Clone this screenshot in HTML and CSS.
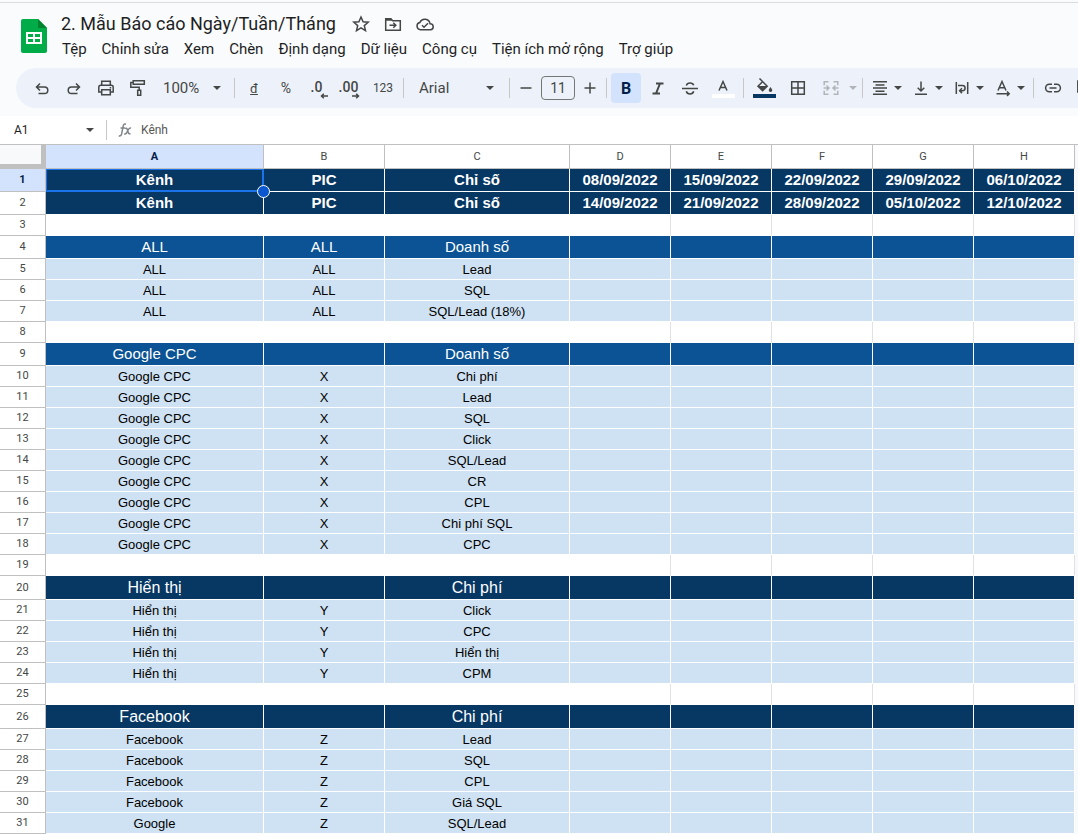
FILE: index.html
```html
<!DOCTYPE html>
<html lang="vi">
<head>
<meta charset="utf-8">
<title>2. Mẫu Báo cáo Ngày/Tuần/Tháng</title>
<link rel="stylesheet" href="styles.css">
</head>
<body>
<header class="topbar">
  <svg class="logo" viewBox="0 0 26 34" aria-hidden="true">
    <path fill="#00ac47" d="M2 0h15l9 9v23a2 2 0 0 1-2 2H2a2 2 0 0 1-2-2V2a2 2 0 0 1 2-2z"/>
    <path fill="#00832d" d="M17 0l9 9h-9z"/>
    <path fill="#fff" fill-rule="evenodd" d="M5 13h16v12H5zM7 15v3h5v-3zM14 15v3h5v-3zM7 20v3h5v-3zM14 20v3h5v-3z"/>
  </svg>
  <div class="heading">
    <div class="title-row">
      <h1 class="title">2. Mẫu Báo cáo Ngày/Tuần/Tháng</h1>
      <button class="mini" aria-label="Gắn dấu sao"><svg viewBox="0 0 20 20"><path d="M10 3l2.1 4.7 5.1.5-3.9 3.4 1.2 5-4.5-2.7-4.5 2.7 1.2-5-3.9-3.4 5.1-.5z"/></svg></button>
      <button class="mini" aria-label="Di chuyển"><svg viewBox="0 0 20 20"><path d="M2.7 4.7h5l2 2h7.6v9.600H2.700z"/><path class="solid" d="M2 4h6l2 2.800H2z"/><path d="M6.500 11.300h6M10.300 8.800l2.500 2.500-2.500 2.500"/></svg></button>
      <button class="mini" aria-label="Trạng thái tài liệu"><svg viewBox="0 0 20 20"><path d="M5.500 15.700a3.700 3.700 0 0 1-.6-7.300 5.300 5.300 0 0 1 10.100 1.300 3 3 0 0 1 .4 6zM7 11.200l2 2 4-4"/></svg></button>
    </div>
    <nav class="menu">
      <button>Tệp</button><button>Chỉnh sửa</button><button>Xem</button><button>Chèn</button><button>Định dạng</button><button>Dữ liệu</button><button>Công cụ</button><button>Tiện ích mở rộng</button><button>Trợ giúp</button>
    </nav>
  </div>
</header>

<div class="toolbar-wrap">
<div class="toolbar" role="toolbar">
  <button class="tool" aria-label="Hoàn tác"><svg viewBox="0 0 20 20"><path d="M8 5.500L4.500 9 8 12.500M5 9h7.500a3.300 3.300 0 0 1 0 6.600H6.500"/></svg></button>
  <button class="tool" aria-label="Làm lại"><svg viewBox="0 0 20 20"><path d="M12 5.500L15.500 9 12 12.500M15 9H7.500a3.300 3.300 0 0 0 0 6.600h6"/></svg></button>
  <button class="tool" aria-label="In"><svg viewBox="0 0 20 20"><path d="M5.700 7V3.300h8.600V7M5.700 14H2.800V9.300q0-2 2-2h10.400q2 0 2 2V14h-2.900M5.700 11.700h8.600v5H5.700zM13.700 9.700h1.500"/></svg></button>
  <button class="tool" aria-label="Sao chép định dạng"><svg viewBox="0 0 20 20"><path d="M5.200 2.800h11.100v3.400H5.200zM5.200 4.500H2.800v4.800h8.400v3M9.700 12.300h3v5h-3z"/></svg></button>
  <label class="pick zoom"><select aria-label="Thu phóng"><option>100%</option></select><svg class="caret" viewBox="0 0 10 10"><path d="M1 3h8L5 7z"/></svg></label>
  <span class="sep"></span>
  <button class="tool text under">đ</button>
  <button class="tool text percent">%</button>
  <button class="tool decimals" aria-label="Giảm số chữ số thập phân"><span>.0</span><svg viewBox="0 0 8 6"><path d="M8 3H1.500M3.800 .8L1.500 3l2.300 2.200"/></svg></button>
  <button class="tool decimals" aria-label="Tăng số chữ số thập phân"><span>.00</span><svg viewBox="0 0 8 6"><path d="M0 3h6.500M4.200 .8L6.500 3 4.200 5.200"/></svg></button>
  <button class="tool wide text">123</button>
  <span class="sep"></span>
  <label class="pick font"><select aria-label="Phông chữ"><option>Arial</option></select><svg class="caret" viewBox="0 0 10 10"><path d="M1 3h8L5 7z"/></svg></label>
  <span class="sep"></span>
  <button class="tool step" aria-label="Giảm cỡ chữ"><svg viewBox="0 0 20 20"><path d="M4.500 10h11"/></svg></button>
  <input class="size" aria-label="Cỡ chữ" value="11">
  <button class="tool step" aria-label="Tăng cỡ chữ"><svg viewBox="0 0 20 20"><path d="M4.500 10h11M10 4.500v11"/></svg></button>
  <span class="sep"></span>
  <button class="tool bold active" aria-pressed="true">B</button>
  <button class="tool" aria-label="In nghiêng"><svg viewBox="0 0 20 20"><path class="heavy" d="M8 5.500h7.500M4.500 15.500H12M12 5.500L8 15.500"/></svg></button>
  <button class="tool" aria-label="Gạch ngang"><svg viewBox="0 0 20 20"><path d="M2 10.500h16M13.700 7.300Q13 5 10 5T6.300 7.500M6.300 13.300Q7 16 10 16t3.700-2.700"/></svg></button>
  <button class="tool wide color white" aria-label="Màu văn bản"><svg viewBox="0 0 20 16"><path d="M6 12.500l4-9 4 9M7.300 9.500h5.400"/></svg></button>
  <span class="sep"></span>
  <button class="tool wide color navy" aria-label="Màu nền"><svg viewBox="0 0 20 16"><path d="M5.500 .5l7.700 7.700-4.600 4.500L4 8.200l5-5"/><path class="solid" d="M4 8h9l-4.400 4.700zM16.500 9q1.800 2.200 1.800 3.200a1.800 1.800 0 0 1-3.600 0q0-1 1.800-3.200z"/></svg></button>
  <button class="tool wide" aria-label="Đường viền"><svg viewBox="0 0 20 20"><path d="M3.700 3.700h12.600v12.600H3.700zM10 3.700v12.600M3.700 10h12.600"/></svg></button>
  <button class="tool faded" aria-label="Hợp nhất ô"><svg viewBox="0 0 20 20"><path d="M7.500 3.700H3.200v3.600M12.500 3.700h4.300v3.600M7.500 16.300H3.200v-3.600M12.500 16.300h4.300v-3.600M2.500 10h5M5.500 7.500L8 10l-2.500 2.500M17.500 10h-5M14.500 7.500L12 10l2.500 2.500"/></svg></button>
  <button class="narrow faded" aria-label="Kiểu hợp nhất"><svg class="caret" viewBox="0 0 10 10"><path d="M1 3h8L5 7z"/></svg></button>
  <span class="sep"></span>
  <button class="combo" aria-label="Căn ngang"><svg viewBox="0 0 20 20"><path d="M3 3.700h14M5.500 6.900h9M3 10h14M5.500 13.200h9M3 16.300h14"/></svg><svg class="caret" viewBox="0 0 10 10"><path d="M1 3h8L5 7z"/></svg></button>
  <button class="combo" aria-label="Căn dọc"><svg viewBox="0 0 20 20"><path d="M4 16.300h12M10 3.500v9.300M6.700 9.700L10 13l3.300-3.300"/></svg><svg class="caret" viewBox="0 0 10 10"><path d="M1 3h8L5 7z"/></svg></button>
  <button class="combo" aria-label="Xuống dòng"><svg viewBox="0 0 20 20"><path d="M4.300 4v12M15.700 4v12M6 7.500h4.500a2.600 2.600 0 0 1 0 5.200H8M10 10.300l-2.400 2.400 2.400 2.400"/></svg><svg class="caret" viewBox="0 0 10 10"><path d="M1 3h8L5 7z"/></svg></button>
  <button class="combo" aria-label="Xoay văn bản"><svg viewBox="0 0 20 20"><path d="M5 12.500L9 3.500l4 9M6.300 9.700h5.400M3.500 15.700h12.500M14 13.500l2.200 2.200-2.200 2.200"/></svg><svg class="caret" viewBox="0 0 10 10"><path d="M1 3h8L5 7z"/></svg></button>
  <span class="sep"></span>
  <button class="tool" aria-label="Chèn đường liên kết"><svg viewBox="0 0 20 20"><path d="M9 6.300H6.300a3.700 3.700 0 0 0 0 7.400H9M11 6.300h2.700a3.700 3.700 0 0 1 0 7.400H11M6.500 10h7"/></svg></button>
  <button class="tool" aria-label="Chèn nhận xét"><svg viewBox="0 0 20 20"><path d="M2.800 3h14.500v14l-3-3H2.800z"/></svg></button>
</div>
</div>

<div class="formula-bar">
  <label class="pick name"><input aria-label="Hộp tên" value="A1"><svg class="caret" viewBox="0 0 10 10"><path d="M1 3h8L5 7z"/></svg></label>
  <span class="sep"></span>
  <svg class="fx" viewBox="0 0 14 14" aria-hidden="true"><path d="M8 1.200Q5.800.2 5.200 3L3.600 11Q3 13.500.8 12.700M2.500 5h4.500M7 5.500q1.500-1 2.300 1l1 3q.6 2 2.200 1M13 5.200q-1.300-.5-2.600 1.300L8.500 10q-1 1.400-2.300.8"/></svg>
  <input class="formula" aria-label="Thanh công thức" value="Kênh">
</div>

<main class="sheet">
<table class="grid">
<colgroup><col class="c-num"><col class="c-a"><col class="c-b"><col class="c-c"><col class="c-d"><col class="c-d"><col class="c-d"><col class="c-d"><col class="c-d"></colgroup>
<thead>
<tr><th class="corner"></th><th class="on">A</th><th>B</th><th>C</th><th>D</th><th>E</th><th>F</th><th>G</th><th>H</th></tr>
</thead>
<tbody>
<tr class="head"><th class="on">1</th><td class="selected">Kênh</td><td>PIC</td><td>Chỉ số</td><td>08/09/2022</td><td>15/09/2022</td><td>22/09/2022</td><td>29/09/2022</td><td>06/10/2022</td></tr>
<tr class="head"><th>2</th><td>Kênh</td><td>PIC</td><td>Chỉ số</td><td>14/09/2022</td><td>21/09/2022</td><td>28/09/2022</td><td>05/10/2022</td><td>12/10/2022</td></tr>
<tr class="blank"><th>3</th><td></td><td></td><td></td><td></td><td></td><td></td><td></td><td></td></tr>
<tr class="blue"><th>4</th><td>ALL</td><td>ALL</td><td>Doanh số</td><td></td><td></td><td></td><td></td><td></td></tr>
<tr><th>5</th><td>ALL</td><td>ALL</td><td>Lead</td><td></td><td></td><td></td><td></td><td></td></tr>
<tr><th>6</th><td>ALL</td><td>ALL</td><td>SQL</td><td></td><td></td><td></td><td></td><td></td></tr>
<tr><th>7</th><td>ALL</td><td>ALL</td><td>SQL/Lead (18%)</td><td></td><td></td><td></td><td></td><td></td></tr>
<tr class="blank"><th>8</th><td></td><td></td><td></td><td></td><td></td><td></td><td></td><td></td></tr>
<tr class="blue"><th>9</th><td>Google CPC</td><td></td><td>Doanh số</td><td></td><td></td><td></td><td></td><td></td></tr>
<tr><th>10</th><td>Google CPC</td><td>X</td><td>Chi phí</td><td></td><td></td><td></td><td></td><td></td></tr>
<tr><th>11</th><td>Google CPC</td><td>X</td><td>Lead</td><td></td><td></td><td></td><td></td><td></td></tr>
<tr><th>12</th><td>Google CPC</td><td>X</td><td>SQL</td><td></td><td></td><td></td><td></td><td></td></tr>
<tr><th>13</th><td>Google CPC</td><td>X</td><td>Click</td><td></td><td></td><td></td><td></td><td></td></tr>
<tr><th>14</th><td>Google CPC</td><td>X</td><td>SQL/Lead</td><td></td><td></td><td></td><td></td><td></td></tr>
<tr><th>15</th><td>Google CPC</td><td>X</td><td>CR</td><td></td><td></td><td></td><td></td><td></td></tr>
<tr><th>16</th><td>Google CPC</td><td>X</td><td>CPL</td><td></td><td></td><td></td><td></td><td></td></tr>
<tr><th>17</th><td>Google CPC</td><td>X</td><td>Chi phí SQL</td><td></td><td></td><td></td><td></td><td></td></tr>
<tr><th>18</th><td>Google CPC</td><td>X</td><td>CPC</td><td></td><td></td><td></td><td></td><td></td></tr>
<tr class="blank"><th>19</th><td></td><td></td><td></td><td></td><td></td><td></td><td></td><td></td></tr>
<tr class="navy-row"><th>20</th><td>Hiển thị</td><td></td><td>Chi phí</td><td></td><td></td><td></td><td></td><td></td></tr>
<tr><th>21</th><td>Hiển thị</td><td>Y</td><td>Click</td><td></td><td></td><td></td><td></td><td></td></tr>
<tr><th>22</th><td>Hiển thị</td><td>Y</td><td>CPC</td><td></td><td></td><td></td><td></td><td></td></tr>
<tr><th>23</th><td>Hiển thị</td><td>Y</td><td>Hiển thị</td><td></td><td></td><td></td><td></td><td></td></tr>
<tr><th>24</th><td>Hiển thị</td><td>Y</td><td>CPM</td><td></td><td></td><td></td><td></td><td></td></tr>
<tr class="blank"><th>25</th><td></td><td></td><td></td><td></td><td></td><td></td><td></td><td></td></tr>
<tr class="navy-row"><th>26</th><td>Facebook</td><td></td><td>Chi phí</td><td></td><td></td><td></td><td></td><td></td></tr>
<tr><th>27</th><td>Facebook</td><td>Z</td><td>Lead</td><td></td><td></td><td></td><td></td><td></td></tr>
<tr><th>28</th><td>Facebook</td><td>Z</td><td>SQL</td><td></td><td></td><td></td><td></td><td></td></tr>
<tr><th>29</th><td>Facebook</td><td>Z</td><td>CPL</td><td></td><td></td><td></td><td></td><td></td></tr>
<tr><th>30</th><td>Facebook</td><td>Z</td><td>Giá SQL</td><td></td><td></td><td></td><td></td><td></td></tr>
<tr><th>31</th><td>Google</td><td>Z</td><td>SQL/Lead</td><td></td><td></td><td></td><td></td><td></td></tr>
</tbody>
</table>
</main>
</body>
</html>
```

FILE: styles.css
```css
* { box-sizing: border-box; }

body {
  margin: 0;
  padding-top: 2px;
  background: #f9fbfd;
  color: #1f1f1f;
  font-family: Roboto, "Liberation Sans", sans-serif;
  font-size: 14px;
}

button, input, select {
  margin: 0;
  padding: 0;
  border: 0;
  background: none;
  color: inherit;
  font: inherit;
  appearance: none;
  outline: 0;
}

svg {
  display: block;
  flex: none;
  fill: none;
  stroke: #444746;
  stroke-width: 1.5;
}

.solid, .caret path { fill: #444746; stroke: none; }
.heavy { stroke-width: 2; }
.caret { width: 10px; height: 10px; }

/* Title and menus */
.topbar {
  display: flex;
  gap: 14px;
  padding: 9px 21px;
  border-top: 1px solid #dadce0;
}

.logo { width: 26px; height: 34px; margin-top: 7px; stroke: none; }

.heading { display: flex; flex-direction: column; gap: 3px; }

.title-row { display: flex; align-items: center; height: 24px; }

.title {
  margin: 0 15px 0 0;
  font-size: 18px;
  font-weight: 400;
  line-height: 24px;
  white-space: nowrap;
}

.mini { width: 20px; height: 20px; margin-right: 12px; }
.mini svg { width: 20px; height: 20px; }

.menu { display: flex; gap: 15px; padding-left: 1px; font-size: 15px; white-space: nowrap; }
.menu button { height: 20px; line-height: 20px; }

/* Toolbar */
.toolbar-wrap { overflow: hidden; padding: 0 0 8px 16px; }

.toolbar {
  display: flex;
  align-items: center;
  width: max-content;
  height: 40px;
  padding: 0 10px;
  border-radius: 20px 0 0 20px;
  background: #edf2fa;
  color: #444746;
}

.tool, .combo, .narrow {
  display: flex;
  align-items: center;
  justify-content: center;
  flex: none;
  width: 32px;
  height: 30px;
}
.tool svg, .combo svg { width: 20px; height: 20px; }
.tool.wide { width: 34px; }
.tool.step { width: 26px; }
.tool.text { font-size: 12px; }
.tool.percent { font-size: 14px; }
.tool.under { font-size: 13px; text-decoration: underline; }
.narrow { width: 12px; }
.faded { opacity: 0.35; }

.combo { gap: 3px; width: 41px; }
.combo .caret, .narrow .caret { width: 10px; height: 10px; }

.sep { flex: none; width: 1px; height: 20px; margin: 0 3px; background: #c7c7c7; }

.tool.decimals {
  flex-direction: column;
  padding-top: 3px;
  font-size: 14px;
  font-weight: 500;
  line-height: 12px;
}
.tool.decimals svg { width: 8px; height: 6px; margin-left: 12px; }
.tool.decimals span { margin-right: 3px; }

.pick { display: flex; align-items: center; flex: none; }
.pick select, .pick input { flex: 1; min-width: 0; }
.zoom { width: 77px; padding: 0 9px; font-size: 15px; }
.font { width: 99px; padding: 0 11px 0 12px; font-size: 15px; }

.size {
  width: 34px;
  height: 24px;
  margin: 0 2px;
  border: 1px solid #747775;
  border-radius: 4px;
  text-align: center;
}

.bold { width: 30px; margin: 0 1px; font-size: 16px; font-weight: 700; }
.active { border-radius: 4px; background: #d3e3fd; color: #041e49; }

.color { flex-direction: column; }
.tool.color svg { width: 20px; height: 16px; }
.color::after { content: ""; width: 23px; height: 4px; }
.white::after { background: #fff; }
.navy::after { background: #073763; }

/* Formula bar */
.formula-bar {
  display: flex;
  align-items: center;
  height: 29px;
  border-bottom: 1px solid #c0c0c0;
  background: #fff;
  font-size: 12px;
}
.name { width: 103px; padding: 0 8px 0 14px; }
.fx { width: 14px; height: 14px; margin: 0 9px 0 8px; stroke: #80868b; }
.formula { flex: 1; min-width: 0; color: #575757; }

/* Grid */
.sheet { overflow: hidden; background: #f8f9fa; }

.grid {
  width: 1075px;
  table-layout: fixed;
  border-spacing: 0;
  font-family: "Liberation Sans", Arial, sans-serif;
  font-size: 13px;
  line-height: 18px;
}
.c-num { width: 46px; }
.c-a { width: 218px; }
.c-b { width: 121px; }
.c-c { width: 185px; }
.c-d { width: 101px; }

.grid th {
  padding: 0;
  border: solid #c0c0c0;
  border-width: 0 1px 1px 0;
  background: #fff;
  color: #444746;
  font-family: Roboto, "Liberation Sans", sans-serif;
  font-size: 11px;
  font-weight: 400;
}
.grid thead th { height: 24px; }
.grid .corner { border-width: 0 5px 5px 0; background: #f8f9fa; }
.grid .on { background: #d3e3fd; color: #041e49; font-weight: 700; }

.grid td {
  height: 21px;
  padding: 2px 0 0;
  border: solid #fff;
  border-width: 0 1px 1px 0;
  background: #cfe2f3;
  color: #000;
  text-align: center;
  white-space: nowrap;
}
.grid .blank td { background: #fff; }
.grid .blank td:nth-child(n + 5) { border-right-color: #e1e1e1; }

.grid .head td {
  height: 23px;
  padding: 0;
  background: #073763;
  color: #fff;
  font-size: 15px;
  font-weight: 700;
}
.grid .blue td { height: 23px; padding: 0; background: #0b5394; color: #fff; font-size: 15px; }
.grid .navy-row td { height: 24px; padding: 0; background: #073763; color: #fff; font-size: 16px; }

.selected { position: relative; }
.selected::before {
  content: "";
  position: absolute;
  inset: 0 -1px -1px 0;
  border: solid #1a73e8;
  border-width: 1px 2px 2px 1px;
}
.selected::after {
  content: "";
  position: absolute;
  z-index: 1;
  right: -7px;
  bottom: -7px;
  width: 11px;
  height: 11px;
  border: 1px solid #fff;
  border-radius: 50%;
  background: #0b57d0;
}
```
